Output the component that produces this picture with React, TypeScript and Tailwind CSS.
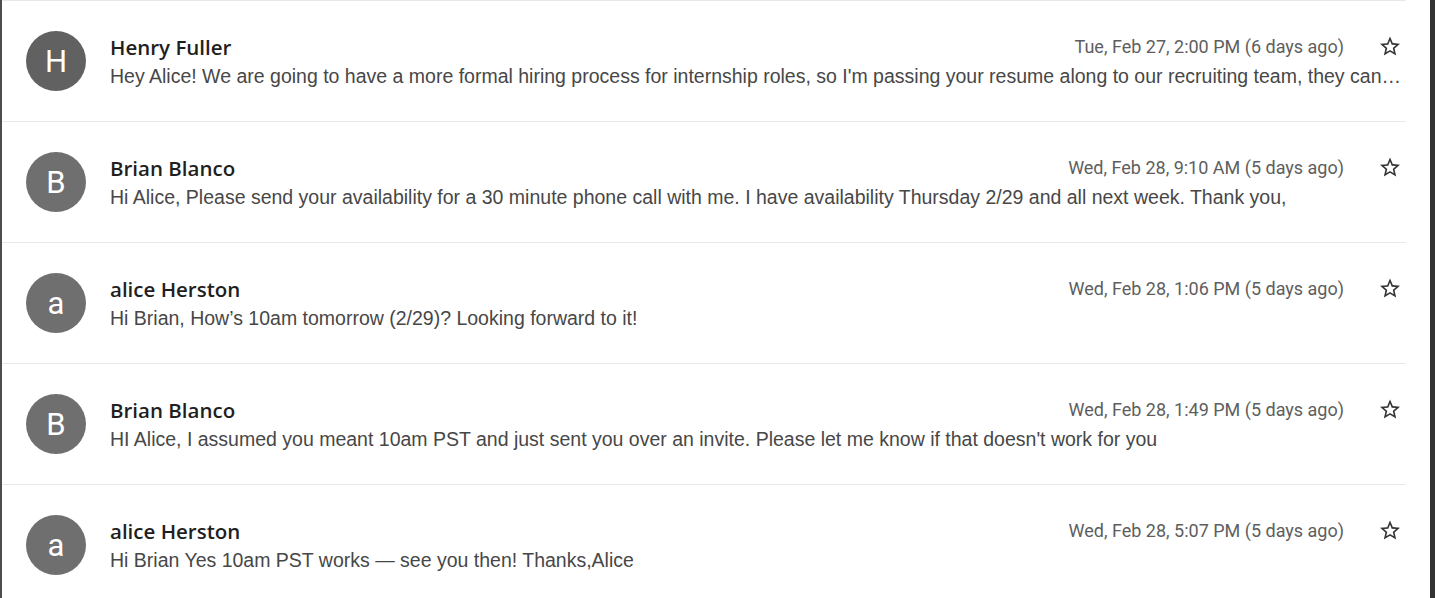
const messages = [
  {
    initial: 'H',
    name: 'Henry Fuller',
    date: 'Tue, Feb 27, 2:00 PM (6 days ago)',
    snippet:
      "Hey Alice! We are going to have a more formal hiring process for internship roles, so I'm passing your resume along to our recruiting team, they can reach out to you about next steps and timing for the process.",
    avatar: 'bg-[#616161]',
  },
  {
    initial: 'B',
    name: 'Brian Blanco',
    date: 'Wed, Feb 28, 9:10 AM (5 days ago)',
    snippet:
      'Hi Alice, Please send your availability for a 30 minute phone call with me. I have availability Thursday 2/29 and all next week. Thank you,',
    avatar: 'bg-[#6f6f6f]',
  },
  {
    initial: 'a',
    name: 'alice Herston',
    date: 'Wed, Feb 28, 1:06 PM (5 days ago)',
    snippet: 'Hi Brian, How’s 10am tomorrow (2/29)? Looking forward to it!',
    avatar: 'bg-[#6f6f6f]',
  },
  {
    initial: 'B',
    name: 'Brian Blanco',
    date: 'Wed, Feb 28, 1:49 PM (5 days ago)',
    snippet:
      "HI Alice, I assumed you meant 10am PST and just sent you over an invite. Please let me know if that doesn't work for you",
    avatar: 'bg-[#6f6f6f]',
  },
  {
    initial: 'a',
    name: 'alice Herston',
    date: 'Wed, Feb 28, 5:07 PM (5 days ago)',
    snippet: 'Hi Brian Yes 10am PST works — see you then! Thanks,Alice',
    avatar: 'bg-[#6f6f6f]',
  },
];

function StarOutline() {
  return (
    <svg width="25" height="25" viewBox="0 0 24 24" className="fill-[#333333]">
      <path d="M22 9.24l-7.19-.62L12 2 9.19 8.63 2 9.24l5.46 4.73L5.82 21 12 17.27 18.18 21l-1.63-7.03L22 9.24zM12 15.4l-3.76 2.27 1-4.28-3.32-2.88 4.38-.38L12 6.1l1.71 4.04 4.38.38-3.32 2.88 1 4.28L12 15.4z" />
    </svg>
  );
}

export default function App() {
  return (
    <div className="flex h-[598px] w-[1435px] overflow-hidden bg-white font-['Liberation_Sans',Arial,sans-serif]">
      <div className="w-[2px] shrink-0 bg-[#4d4d4d]" />
      <div className="w-[1404px] shrink-0">
        {messages.map((m, i) => (
          <div key={i} className="flex h-[121px] items-center border-t border-[#e8e8e8] pl-6">
            <div
              className={`flex h-[60px] w-[60px] shrink-0 items-center justify-center rounded-full ${m.avatar} text-[31px] leading-none text-white font-['Roboto',sans-serif]`}
            >
              {m.initial}
            </div>
            <div className="ml-6 min-w-0 flex-1">
              <div className="flex h-[24px] items-center pr-1">
                <div className="flex-1 font-['Open_Sans',sans-serif] text-[20.5px] leading-[24px] font-semibold text-[#1f1f1f]">
                  {m.name}
                </div>
                <div className="font-['Roboto',sans-serif] text-[18px] leading-[24px] text-[#5e5e5e]">{m.date}</div>
                <div className="ml-[34px] flex w-[24px] items-center justify-center">
                  <StarOutline />
                </div>
              </div>
              <div className="mt-[5px] truncate text-[19.5px] leading-[24px] text-[#474747]">{m.snippet}</div>
            </div>
          </div>
        ))}
      </div>
      <div className="flex-1" />
      <div className="w-[5px] shrink-0 bg-[#333333]" />
    </div>
  );
}
